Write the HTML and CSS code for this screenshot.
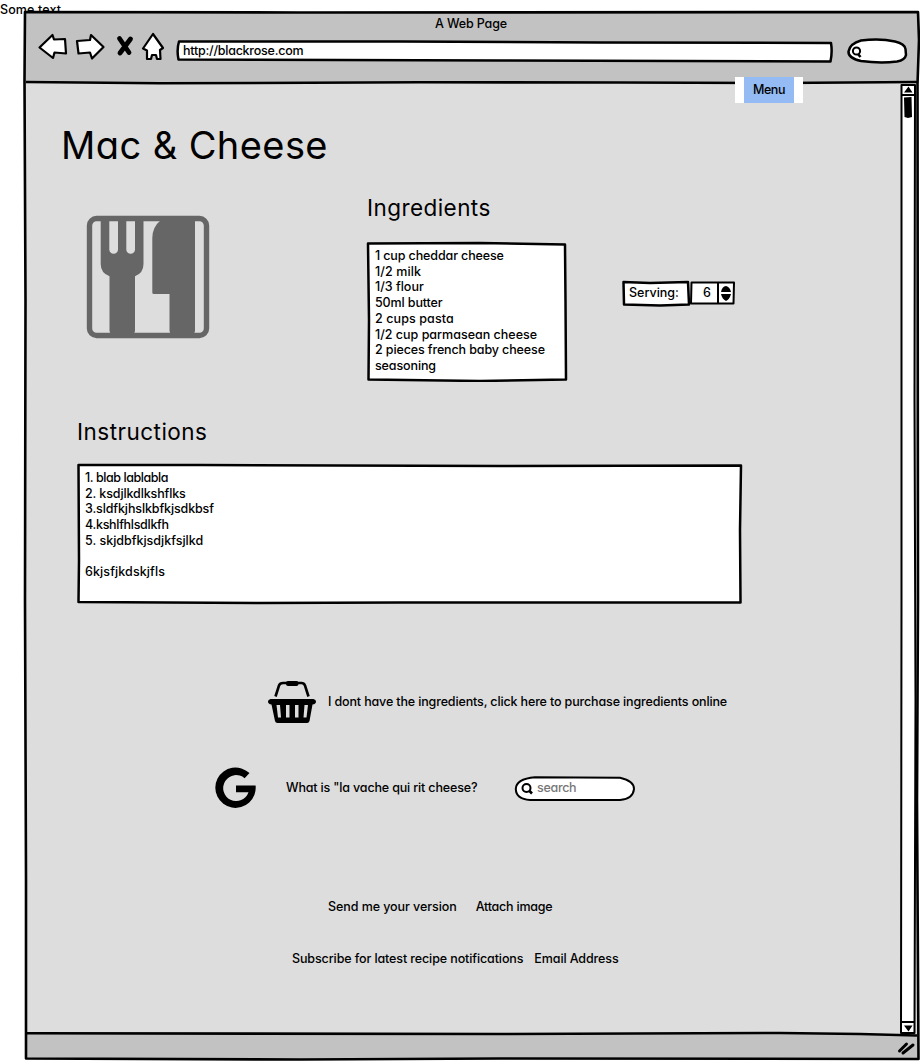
FILE: index.html
```
<!DOCTYPE html>
<html lang="en">
<head>
<meta charset="utf-8">
<title>A Web Page</title>
<link rel="stylesheet" href="styles.css">
</head>
<body>
<div class="screen">
  <span class="stray">Some text</span>
  <svg class="frame" viewBox="0 0 920 1061">
    <path class="chrome" d="M25 12L918 12.5L919 300L917.5 600L918.5 1059L300 1059.500L26 1058L26 700L25 400Z"/>
    <path class="paper" d="M26 82L160 83.500L420 82.500L620 82.500L780 83L918 82V1036L830 1033.500L500 1033L26 1033.500Z"/>
    <path class="line" d="M25 12L300 12.500L918 12L919 40L917.500 84L918 600L917 800L918.500 1059L500 1058.500L300 1059.500L26 1058.500L26 880L25 600L25.500 300L24.500 80Z"/>
    <path class="line" d="M26 82L160 83.300L420 82.300L620 82.500L780 83L918 82M26 1033.300L500 1034L780 1033L860 1034L917 1035.500"/>
    <path class="grip" d="M899.500 1051L906.500 1044M903 1053L913 1045"/>
  </svg>
  <div class="browser">
    <header>
      <div class="caption">A Web Page</div>
      <nav class="toolbar">
        <svg width="32" height="30" viewBox="37 32 32 30"><path class="tool" d="M39.500 47.500L52.500 35L54 39.500L65 39L66 53.500L54.500 52.500L53 58Z"/></svg>
        <svg width="32" height="30" viewBox="75 32 32 30"><path class="tool" d="M77 41L90 40L91 35L103.500 47L92 58.500L90 52.500L78.500 53.500Z"/></svg>
        <svg width="20" height="30" viewBox="115 32 20 30"><path class="cross" d="M119.500 38.500L129 52.500M130.500 39L120 53"/></svg>
        <svg width="26" height="30" viewBox="140 32 26 30"><path class="tool" d="M153 34L163 48L160 50L160.500 59H157L156 55L152 55L151 59L147 59V50.500L143 48.500Z"/></svg>
        <div class="url">
          <svg width="660" height="26" viewBox="175 38 660 26"><path class="field" d="M179 41.500L400 41.500L600 42.500L831 43Q832.500 52 830.500 61.500L500 60.500L178.500 59.500Q176.500 50 179 41.500Z"/></svg>
          <span>http://blackrose.com</span>
        </div>
        <svg width="64" height="30" viewBox="845 36 64 30"><path class="field" d="M861 40.500Q880 38 895 41.500Q905 44 905.500 49L906 55Q905 60 897 61.500Q880 63.500 861 61Q848 58 848.500 51.500Q850 43.500 861 40.500Z"/><circle class="lens" cx="856.500" cy="51" r="3.600"/><path class="line" d="M858 54L860.500 57"/></svg>
      </nav>
      <div class="menu"><span class="menu-item">Menu</span></div>
    </header>
    <div class="body">
      <main>
        <h1>Mac &amp; Cheese</h1>
        <section class="recipe">
          <svg class="food" width="124" height="124" viewBox="86 215 124 124">
            <rect x="89.500" y="218.500" width="117" height="117" rx="7" fill="none" stroke="#666" stroke-width="5.400"/>
            <path fill="#666" d="M100.700 220H109.300V249.500A4.350 4.350 0 0 0 118 249.500V220H126.300V249.500A4.350 4.350 0 0 0 135 249.500V220H143.500V264Q143.500 273 135 276.200V331L134 334H110.500L109.500 331V276.200Q100.700 273 100.700 264ZM161 220Q152.300 227 152.300 238V292.500Q152.300 294 153.800 294H169.500V331L170.500 334H194L195 331V220Z"/>
          </svg>
          <div class="ingredients">
            <h2>Ingredients</h2>
            <div class="note">
              <svg width="202" height="141" viewBox="366 241 202 141"><path class="field" d="M368 243.500L480 243L565 244.500L565.500 300L566 379.500L480 381L368.500 379.500L369 320Z"/></svg>
              <ul>
                <li class="snug">1 cup cheddar cheese</li>
                <li class="wide">1/2 milk</li>
                <li>1/3 flour</li>
                <li class="snug">50ml butter</li>
                <li class="wide">2 cups pasta</li>
                <li>1/2 cup parmasean cheese</li>
                <li class="snug">2 pieces french baby cheese</li>
                <li class="snug">seasoning</li>
              </ul>
            </div>
          </div>
          <div class="serving">
            <svg width="116" height="30" viewBox="621 278 116 30">
              <path class="field" d="M623.500 282L650 283L688 282L689 304.500L660 305.500L624 304.500Z"/>
              <path class="field thin" d="M691.500 282.500H734L733.500 303.500H691ZM718 282.500V303.500"/>
              <path d="M721 292Q722 286.500 726 286Q730 287 731 292ZM721 294H731Q729.500 299.500 726 301Q722 299 721 294Z"/>
            </svg>
            <span class="serving-label">Serving:</span>
            <span class="serving-count">6</span>
          </div>
        </section>
        <section class="instructions">
          <h2>Instructions</h2>
          <div class="note">
            <svg width="668" height="142" viewBox="75 463 668 142"><path class="field" d="M78.500 465L200 465L500 466L741 465.500L740 530L740.500 602.500L400 602.500L260 603L78.500 602L79 560Z"/></svg>
            <ul>
              <li class="tight">1. blab lablabla</li>
              <li class="snug">2. ksdjlkdlkshflks</li>
              <li class="snug">3.sldfkjhslkbfkjsdkbsf</li>
              <li class="condensed">4.kshlfhlsdlkfh</li>
              <li>5. skjdbfkjsdjkfsjlkd</li>
              <li>&nbsp;</li>
              <li class="wide">6kjsfjkdskjfls</li>
            </ul>
          </div>
        </section>
        <section class="shop">
          <svg width="50" height="44" viewBox="267 680 50 44">
            <path d="M275.500 696.500L279 685.500Q280 683 283 683H301.500Q304 683 305 685.500L308.500 696.500" fill="none" stroke="#000" stroke-width="2.600"/>
            <rect x="286" y="681" width="12.500" height="5" rx="2"/>
            <path fill-rule="evenodd" d="M270.500 699H313.500Q316 699.500 316 701.500Q316 704 312.500 704.500L309.500 721Q309 723 307 723H277.500Q275.500 723 275 721L271.500 704.500Q268 704 268 701.500Q268 699.500 270.500 699ZM276.500 705L278 717.500H281L280 705ZM286 705V717.500H289.500V705ZM295 705V717.500H298.500V705ZM304.500 705L303.500 717.500H306.500L308 705Z"/>
          </svg>
          <span>I dont have the ingredients, click here to purchase ingredients online</span>
        </section>
        <section class="google">
          <svg width="42" height="42" viewBox="215 766.500 42 42"><path d="M249.500 772.600L244.600 777.700A13 13 0 1 0 248.500 791.800H236V785H255.600A20.200 20.200 0 1 1 249.500 772.600Z"/></svg>
          <span class="question">What is "la vache qui rit cheese?</span>
          <div class="search">
            <svg width="122" height="27" viewBox="514 775 122 27"><path class="field thin" d="M535 777.300L620 777.800Q634 781 634 789Q633 799 620 800H530Q516 799 515.800 789Q516 779 535 777.300Z"/><circle class="lens" cx="526.500" cy="788" r="4"/><path class="line" d="M529.500 791L532 793.500"/></svg>
            <span>search</span>
          </div>
        </section>
        <section class="links send"><span>Send me your version</span><span class="attach">Attach image</span></section>
        <section class="links subscribe"><span>Subscribe for latest recipe notifications</span><span>Email Address</span></section>
      </main>
      <svg class="scroll" width="20" height="952" viewBox="899 83 20 952">
        <path class="field thin" d="M901.500 85H915L914.500 400L915.500 700L914.500 1033H901L901.500 600ZM901.500 95H915M901 1022H915"/>
        <path d="M904 92.500L908.500 86.500L912.500 92.500ZM904 1025.500H912.500L908.500 1031.500ZM904 97.500L911.500 97L912 117L908 118L904.500 117Z"/>
      </svg>
    </div>
  </div>
</div>
</body>
</html>
```
FILE: styles.css
```
* { box-sizing: border-box; }
body { margin: 0; background: #fff; }
.screen { position: relative; display: grid; width: 920px; height: 1061px; overflow: hidden; font: 500 12.5px/16px Inter, sans-serif; font-feature-settings: "cv11"; color: #000; white-space: nowrap; }
svg { display: block; flex: none; }
h1, h2, ul { margin: 0; padding: 0; font-weight: 400; list-style: none; }
.stray { position: absolute; left: 0; top: 2px; letter-spacing: 0.12px; }

/* Browser window outline */
.frame, .browser { position: relative; grid-area: 1 / 1; }
.frame { width: 920px; height: 1061px; }
.chrome { fill: #c2c2c2; }
.paper { fill: #ddd; }
.line { fill: none; stroke: #000; stroke-width: 2.6; stroke-linejoin: round; }
.grip { fill: none; stroke: #000; stroke-width: 3; stroke-linecap: round; }
.tool { fill: #fff; stroke: #000; stroke-width: 2.2; stroke-linejoin: round; }
.cross { fill: none; stroke: #000; stroke-width: 4.8; stroke-linecap: round; }
.field { fill: #fff; stroke: #000; stroke-width: 2.5; stroke-linejoin: round; }
.thin { stroke-width: 2; }
.lens { fill: none; stroke: #000; stroke-width: 2; }

/* Title bar and toolbar */
header { position: relative; height: 83px; padding-top: 16px; }
.caption { padding-left: 435px; height: 16px; letter-spacing: -0.13px; }
.toolbar { display: flex; align-items: flex-start; padding-left: 37px; }
.toolbar > :nth-child(2) { margin-left: 6px; }
.toolbar > :nth-child(3) { margin-left: 8px; }
.toolbar > :nth-child(4) { margin-left: 5px; }
.url, .note, .serving, .search { display: grid; justify-content: start; align-content: start; }
.url > *, .note > *, .search > * { grid-area: 1 / 1; z-index: 1; }
.url { margin: 6px 10px 0 9px; }
.url span { padding: 5px 0 0 8px; letter-spacing: -0.24px; }
.toolbar > :last-child { margin-top: 4px; }
.menu { position: absolute; left: 735px; top: 77px; width: 68px; height: 26px; padding: 0 9px; background: #fff; z-index: 2; }
.menu-item { display: block; height: 26px; padding: 5px 0 0 9px; background: #94bbf3; letter-spacing: -0.45px; }

/* Page content */
.body { display: flex; }
main { width: 899px; }
h1 { padding: 39px 0 0 61px; height: 113px; font-size: 38px; line-height: 46px; letter-spacing: 0.42px; }
h2 { font-size: 22.5px; line-height: 27px; }
.recipe { display: flex; align-items: flex-start; height: 223px; }
.food { margin: 19px 0 0 86px; }
.ingredients { margin-left: 156px; }
.ingredients h2 { height: 45px; margin-top: -2px; padding-left: 1px; letter-spacing: 0.43px; }
.ingredients .note { margin-top: 2px; }
.note ul { padding: 7px 0 0 9px; font-weight: 500; line-height: 15.7px; }
.snug { letter-spacing: -0.12px; }
.wide { letter-spacing: 0.1px; }
.condensed { letter-spacing: -0.3px; }
.tight { letter-spacing: -0.43px; }
.serving { grid-template-columns: 69px 13px 34px; margin: 82px 0 0 53px; }
.serving svg { grid-area: 1 / 1 / 2 / 4; }
.serving span { grid-area: 1 / 1; padding: 7px 0 0 8px; z-index: 1; }
.serving .serving-count { grid-area: 1 / 3; padding-left: 0; }
.instructions { height: 261px; padding-left: 75px; }
.instructions h2 { height: 44px; padding-left: 2px; line-height: 26px; letter-spacing: 0.48px; }
.instructions ul { padding-left: 10px; }
.shop { display: flex; height: 87px; padding-left: 267px; }
.shop span { padding: 14px 0 0 11px; letter-spacing: -0.14px; }
.google { display: flex; height: 131px; padding-left: 215px; }
.question { width: 257px; padding: 13px 0 0 29px; letter-spacing: -0.16px; }
.search { margin-top: 8px; }
.search span { padding: 5px 0 0 23px; color: #777; letter-spacing: -0.3px; }
.links { display: flex; padding-top: 1px; }
.send { gap: 19px; padding-left: 328px; height: 52px; letter-spacing: -0.07px; }
.attach { letter-spacing: -0.22px; }
.subscribe { gap: 11px; padding-left: 292px; letter-spacing: -0.11px; }
```
